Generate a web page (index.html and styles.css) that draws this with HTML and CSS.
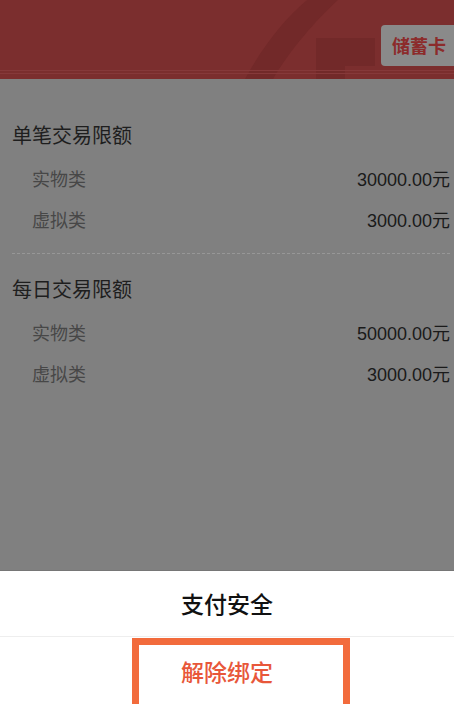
FILE: index.html
```html
<!DOCTYPE html>
<html lang="zh-CN">
<head>
<meta charset="utf-8">
<title>支付安全</title>
<link rel="stylesheet" href="styles.css">
</head>
<body>
<div class="page">
  <header class="header">
    <svg class="deco" width="454" height="79" viewBox="0 0 454 79">
      <path d="M307 0 L338 0 C316 20 290 50 273 79 L245 79 C262 48 283 20 307 0 Z" fill="#722929"/>
      <path d="M316 38 L375 38 L375 66 L345 66 L345 79 L316 79 Z" fill="#722929"/>
      <rect x="0" y="70" width="454" height="1" fill="#86393a"/>
      <rect x="0" y="73" width="454" height="1" fill="#86393a"/>
    </svg>
    <div class="badge">储蓄卡</div>
  </header>
  <main class="content">
    <section class="group">
      <h2 class="group-title">单笔交易限额</h2>
      <div class="row"><span class="label">实物类</span><span class="value">30000.00元</span></div>
      <div class="row"><span class="label">虚拟类</span><span class="value">3000.00元</span></div>
    </section>
    <div class="dash"></div>
    <section class="group group-second">
      <h2 class="group-title">每日交易限额</h2>
      <div class="row"><span class="label">实物类</span><span class="value">50000.00元</span></div>
      <div class="row"><span class="label">虚拟类</span><span class="value">3000.00元</span></div>
    </section>
  </main>
  <footer class="sheet">
    <div class="sheet-title">支付安全</div>
    <div class="sheet-action">解除绑定</div>
    <div class="highlight"></div>
  </footer>
</div>
</body>
</html>
```
FILE: styles.css
```css
html, body {
  margin: 0;
  padding: 0;
}
body {
  font-family: "Liberation Sans", "Noto Sans CJK SC", sans-serif;
  background: #808080;
}
.page {
  width: 454px;
  height: 704px;
  display: flex;
  flex-direction: column;
  overflow: hidden;
  position: relative;
}
.header {
  height: 79px;
  flex: none;
  background: #7b2e2e;
  position: relative;
  display: flex;
  justify-content: flex-end;
  align-items: flex-start;
}
.deco {
  position: absolute;
  left: 0;
  top: 0;
}
.badge {
  position: relative;
  margin-top: 25px;
  width: 73px;
  height: 41px;
  box-sizing: border-box;
  padding-left: 11px;
  background: #8a8a8a;
  border-radius: 4px 0 0 4px;
  color: #8c2b2b;
  font-family: "Noto Sans CJK SC", sans-serif;
  font-weight: 700;
  font-size: 18px;
  line-height: 41px;
}
.content {
  flex: 1;
  background: #808080;
  padding: 0 4px 0 12px;
  border-bottom: 1px solid #767676;
}
.group {
  padding-top: 34px;
}
.group-second {
  padding-top: 13px;
}
.group-title {
  margin: 0;
  font-size: 20px;
  font-weight: 400;
  line-height: 44px;
  color: #1e1e1e;
  font-family: "Noto Sans CJK SC", sans-serif;
}
.row {
  display: flex;
  justify-content: space-between;
  align-items: center;
  height: 41px;
  padding-left: 20px;
}
.label {
  font-family: "Noto Sans CJK SC", sans-serif;
  font-size: 18px;
  color: #474747;
}
.value {
  font-size: 18px;
  color: #1a1a1a;
}
.dash {
  margin-top: 14px;
  border-top: 1px dashed #979797;
}
.sheet {
  flex: none;
  height: 133px;
  background: #ffffff;
  position: relative;
  display: flex;
  flex-direction: column;
}
.sheet-title {
  height: 65px;
  line-height: 65px;
  text-align: center;
  font-family: "Noto Sans CJK SC", sans-serif;
  font-size: 23px;
  font-weight: 500;
  color: #111111;
  border-bottom: 1px solid #eeeeee;
}
.sheet-action {
  flex: 1;
  display: flex;
  align-items: center;
  justify-content: center;
  font-family: "Noto Sans CJK SC", sans-serif;
  font-size: 23px;
  font-weight: 500;
  color: #e8573a;
}
.highlight {
  position: absolute;
  left: 132px;
  top: 67px;
  width: 218px;
  height: 80px;
  box-sizing: border-box;
  border: 7px solid #f26b3c;
}
```
